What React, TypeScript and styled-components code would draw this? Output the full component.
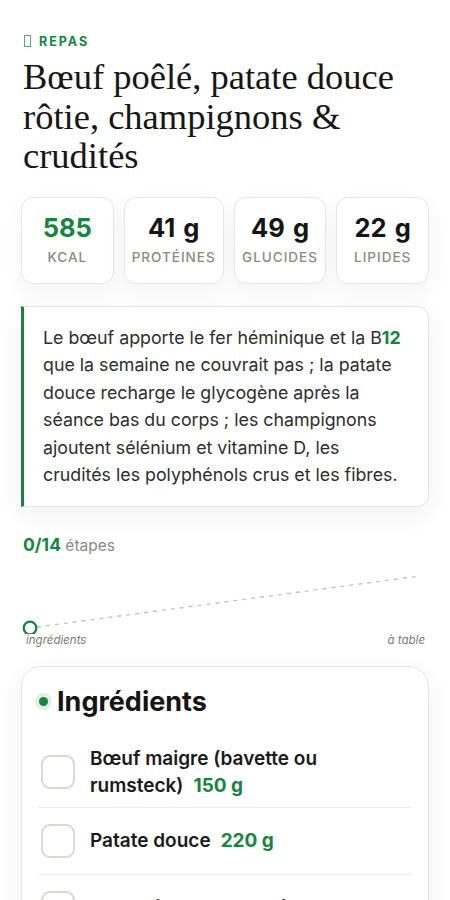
import styled, { createGlobalStyle } from 'styled-components';

const green = '#17843f';

const GlobalStyle = createGlobalStyle`
  html, body {
    margin: 0;
    padding: 0;
    background: #ffffff;
  }
  body {
    font-family: Inter, "Noto Sans", sans-serif;
    color: #1a1a1a;
  }
`;

const Page = styled.main`
  width: 450px;
  box-sizing: border-box;
  padding: 33px 21px 40px;
  display: flex;
  flex-direction: column;
`;

const Eyebrow = styled.div`
  display: flex;
  align-items: center;
  gap: 8px;
  padding-left: 3px;
  height: 16px;
  font-size: 12.5px;
  font-weight: 700;
  letter-spacing: 2px;
  color: ${green};
`;

const Tofu = styled.span`
  width: 5px;
  height: 10px;
  border: 1px solid ${green};
  opacity: 0.7;
`;

const Title = styled.h1`
  margin: 8px 0 0 2px;
  font-family: "Liberation Serif", "DejaVu Serif", serif;
  font-weight: 400;
  font-size: 36.5px;
  line-height: 39.5px;
  color: #161616;
`;

const Macros = styled.div`
  display: flex;
  gap: 10px;
  margin-top: 21px;
`;

const MacroCard = styled.div`
  flex: 1 1 0;
  min-width: auto;
  height: 87px;
  box-sizing: border-box;
  padding: 15px 7px 0;
  border: 1px solid #e6e6e3;
  border-radius: 12px;
  background: #fff;
  box-shadow: 0 8px 22px rgba(0, 0, 0, 0.05);
  display: flex;
  flex-direction: column;
  align-items: center;
`;

const MacroValue = styled.div<{ $accent?: boolean }>`
  font-size: 25.5px;
  font-weight: 700;
  line-height: 30px;
  word-spacing: 2px;
  color: ${({ $accent }) => ($accent ? green : '#151515')};
`;

const MacroLabel = styled.div`
  margin-top: 6px;
  font-size: 13.5px;
  line-height: 16px;
  letter-spacing: 1px;
  font-weight: 500;
  color: #8b8a80;
  white-space: nowrap;
`;

const Note = styled.div`
  margin-top: 22px;
  padding: 17px 20px 17px 19px;
  border: 1px solid #e6e6e3;
  border-left: 3px solid ${green};
  border-radius: 0 12px 12px 0;
  background: #fff;
  box-shadow: 0 8px 24px rgba(0, 0, 0, 0.06);
  font-size: 17.8px;
  line-height: 27.5px;
  color: #2e2e2e;
`;

const Accent = styled.span`
  color: ${green};
  font-weight: 700;
`;

const Progress = styled.div`
  margin-top: 28px;
  padding-left: 2px;
  font-size: 15.5px;
  line-height: 20px;
  color: #8a8a84;
`;

const ProgressCount = styled.span`
  color: ${green};
  font-weight: 700;
  font-size: 17.5px;
`;

const Track = styled.div`
  margin-top: 11px;
  display: flex;
  flex-direction: column;
`;

const TrackArt = styled.svg`
  display: block;
  width: 408px;
  height: 67px;
`;

const TrackLabels = styled.div`
  display: flex;
  justify-content: space-between;
  padding: 0 4px 0 5px;
  font-size: 11.5px;
  line-height: 12px;
  font-style: italic;
  color: #7c7c78;
`;

const IngredientsCard = styled.section`
  margin-top: 20px;
  padding: 19px 17px 0;
  border: 1px solid #e6e6e3;
  border-radius: 20px;
  background: #fff;
  box-shadow: 0 8px 26px rgba(0, 0, 0, 0.06);
`;

const SectionHead = styled.h2`
  margin: 0 0 19px;
  display: flex;
  align-items: center;
  gap: 9px;
  font-size: 27px;
  line-height: 32px;
  font-weight: 700;
  color: #151515;
`;

const Dot = styled.span`
  width: 9px;
  height: 9px;
  border-radius: 50%;
  background: ${green};
  box-shadow: 0 0 0 4px #e3efe6;
`;

const List = styled.ul`
  list-style: none;
  margin: 0;
  padding: 0;
`;

const Item = styled.li`
  display: flex;
  align-items: center;
  gap: 15px;
  min-height: 50px;
  padding: 8px 0 8px 2px;
  border-bottom: 1px solid #ececea;
  &:last-child {
    border-bottom: none;
  }
`;

const Check = styled.span`
  flex: none;
  width: 34px;
  height: 34px;
  box-sizing: border-box;
  border: 2px solid #d8d8d5;
  border-radius: 9px;
  background: #fff;
`;

const ItemText = styled.div`
  font-size: 19px;
  line-height: 27px;
  font-weight: 600;
  color: #1a1a1a;
`;

const Qty = styled.span`
  margin-left: 10px;
  color: ${green};
  font-weight: 700;
`;

const macros = [
  { value: '585', label: 'KCAL', accent: true },
  { value: '41 g', label: 'PROTÉINES' },
  { value: '49 g', label: 'GLUCIDES' },
  { value: '22 g', label: 'LIPIDES' },
];

const ingredients = [
  { name: 'Bœuf maigre (bavette ou rumsteck)', qty: '150 g' },
  { name: 'Patate douce', qty: '220 g' },
  { name: 'Champignons de Paris', qty: '120 g' },
  { name: 'Crudités', qty: '100 g' },
];

export default function App() {
  return (
    <>
      <GlobalStyle />
      <Page>
        <Eyebrow>
          <Tofu />
          REPAS
        </Eyebrow>
        <Title>Bœuf poêlé, patate douce rôtie, champignons &amp; crudités</Title>

        <Macros>
          {macros.map((m) => (
            <MacroCard key={m.label}>
              <MacroValue $accent={m.accent}>{m.value}</MacroValue>
              <MacroLabel>{m.label}</MacroLabel>
            </MacroCard>
          ))}
        </Macros>

        <Note>
          Le bœuf apporte le fer héminique et la B<Accent>12</Accent> que la semaine ne couvrait
          pas ; la patate douce recharge le glycogène après la séance bas du corps ; les
          champignons ajoutent sélénium et vitamine D, les crudités les polyphénols crus et les
          fibres.
        </Note>

        <Progress>
          <ProgressCount>0/14</ProgressCount> étapes
        </Progress>

        <Track>
          <TrackArt viewBox="0 0 408 67">
            <line
              x1="16"
              y1="60"
              x2="399"
              y2="9"
              stroke="#c4c4c0"
              strokeWidth="1.4"
              strokeDasharray="4 5"
            />
            <circle cx="9" cy="61" r="6.3" fill="#fff" stroke={green} strokeWidth="2.3" />
          </TrackArt>
          <TrackLabels>
            <span>ingrédients</span>
            <span>à table</span>
          </TrackLabels>
        </Track>

        <IngredientsCard>
          <SectionHead>
            <Dot />
            Ingrédients
          </SectionHead>
          <List>
            {ingredients.map((it) => (
              <Item key={it.name}>
                <Check />
                <ItemText>
                  {it.name}
                  <Qty>{it.qty}</Qty>
                </ItemText>
              </Item>
            ))}
          </List>
        </IngredientsCard>
      </Page>
    </>
  );
}
